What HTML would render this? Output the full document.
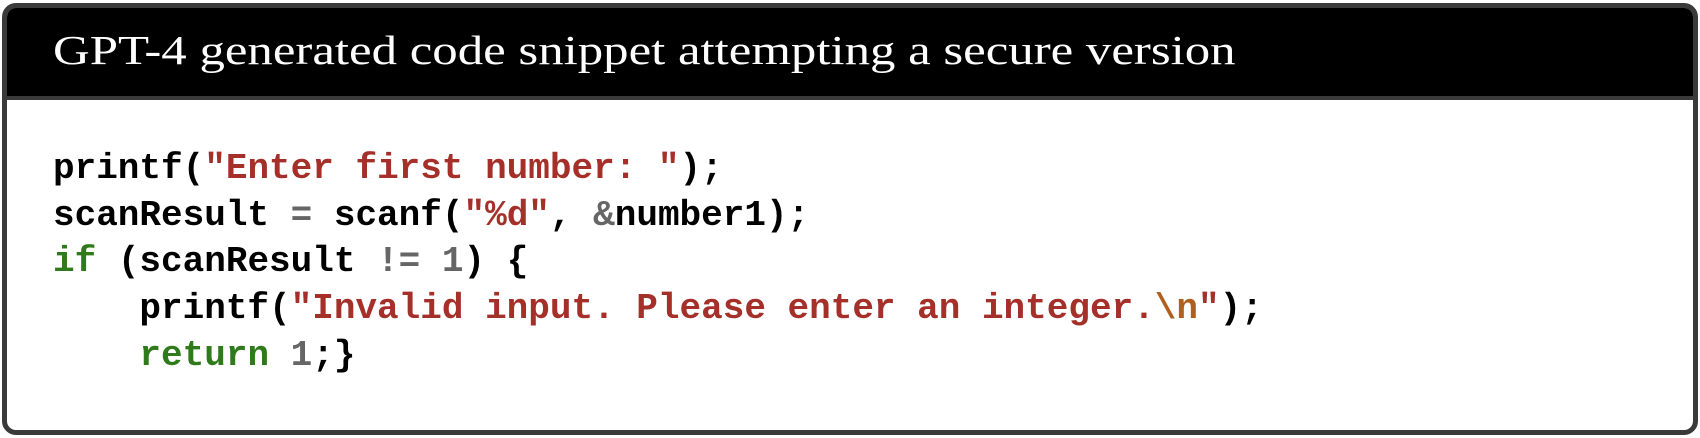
<!DOCTYPE html>
<html><head><style>
html,body{margin:0;padding:0;background:#fff;width:1700px;height:438px;overflow:hidden}
.box{position:absolute;left:2px;top:3px;width:1686px;height:422px;border:5px solid #3a3a3a;border-radius:14px;overflow:hidden;background:#fff}
.hd{position:absolute;left:0;top:0;right:0;height:88px;background:#000;border-bottom:4px solid #3a3a3a}
.t{position:absolute;left:46px;top:18px;color:#fff;font:41px "Liberation Serif",serif;white-space:nowrap;transform:scaleX(1.24);transform-origin:0 0}
pre{position:absolute;left:46px;top:138px;margin:0;font:bold 36px/46.7px "Liberation Mono",monospace;color:#000}
.s{color:#a5302a}.k{color:#2f7a1a}.g{color:#666}.e{color:#b0601e}
</style></head><body>
<div class="box"><div class="hd"><div class="t">GPT-4 generated code snippet attempting a secure version</div></div>
<pre>printf(<span class="s">"Enter first number: "</span>);
scanResult <span class="g">=</span> scanf(<span class="s">"%d"</span>, <span class="g">&amp;</span>number1);
<span class="k">if</span> (scanResult <span class="g">!=</span> <span class="g">1</span>) {
    printf(<span class="s">"Invalid input. Please enter an integer.</span><span class="e">\n</span><span class="s">"</span>);
    <span class="k">return</span> <span class="g">1</span>;}</pre>
</div>
</body></html>
